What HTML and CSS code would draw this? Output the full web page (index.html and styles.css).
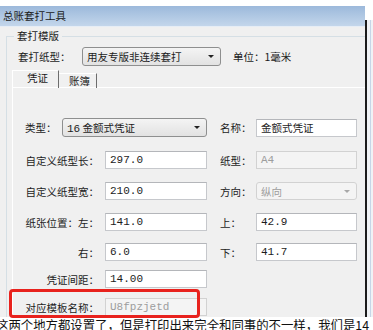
FILE: index.html
```html
<!DOCTYPE html>
<html lang="zh">

<head>
    <meta charset="utf-8">
    <title>总账套打工具</title>
    <link rel="stylesheet" href="styles.css">
</head>

<body>

    <div class="screen">

        <div class="win">
            <div class="main">
                <div class="titlebar">总账套打工具</div>

                <div class="client">
                    <fieldset class="group">
                        <legend>套打模版</legend>

                        <div class="paper">
                            <span class="paper_label">套打纸型：</span>
                            <div class="combo paper_combo">
                                <span>用友专版非连续套打</span>
                                <i class="arrow"></i>
                            </div>
                            <span class="unit">单位：1毫米</span>
                        </div>

                        <div class="tabs">
                            <div class="tab valgt">凭证</div>
                            <div class="tab">账簿</div>
                        </div>

                        <div class="panel">

                            <div class="row">
                                <div class="type">
                                    <span class="type_label">类型：</span>
                                    <div class="combo type_combo">
                                        <span><span class="mono">16</span> 金额式凭证</span>
                                        <i class="arrow"></i>
                                    </div>
                                </div>
                                <span class="rlabel">名称：</span>
                                <div class="field right">金额式凭证</div>
                            </div>

                            <div class="row r2">
                                <span class="label">自定义纸型长：</span>
                                <div class="field mono">297.0</div>
                                <span class="rlabel">纸型：</span>
                                <div class="field right mono off">A4</div>
                            </div>

                            <div class="row">
                                <span class="label">自定义纸型宽：</span>
                                <div class="field mono">210.0</div>
                                <span class="rlabel">方向：</span>
                                <div class="combo right off">
                                    <span>纵向</span>
                                    <i class="arrow"></i>
                                </div>
                            </div>

                            <div class="row">
                                <span class="label">纸张位置：左：</span>
                                <div class="field mono">141.0</div>
                                <span class="rlabel">上：</span>
                                <div class="field right mono">42.9</div>
                            </div>

                            <div class="row r5">
                                <span class="label">右：</span>
                                <div class="field mono">6.0</div>
                                <span class="rlabel">下：</span>
                                <div class="field right mono">41.7</div>
                            </div>

                            <div class="row r6">
                                <span class="label">凭证间距：</span>
                                <div class="field mono">14.00</div>
                            </div>

                            <div class="row r7">
                                <span class="label">对应模板名称：</span>
                                <div class="field mono off">U8fpzjetd</div>
                            </div>

                        </div>
                    </fieldset>
                </div>
            </div>

            <div class="edge"></div>
        </div>

        <div class="mark"></div>

        <p class="caption">这两个地方都设置了，但是打印出来完全和同事的不一样，我们是14</p>

    </div>

</body>

</html>
```

FILE: styles.css
```css
body {
    margin: 0;
    background-color: #fff;
}

.screen {
    position: relative;
    width: 373px;
    height: 330px;
    overflow: hidden;
    font-family: "Noto Sans CJK SC", "Noto Sans", sans-serif;
    font-size: 10.5px;
    color: #1c1c1c;
}

.win {
    display: flex;
    margin-top: 6px;
    height: 311px;
}

.main {
    width: 365px;
    height: 311px;
    overflow: hidden;
    background-color: #f0f0f0;
}

.edge {
    width: 6px;
    margin-top: 14px;
    border-left: 2px solid #1b1b1b;
    background: linear-gradient(to right, #f0f2f5 3px, #c7d5e7 3px, #c7d5e7 4px, #f0f2f5 4px);
}

.titlebar {
    height: 20px;
    line-height: 19px;
    padding-left: 3px;
    background: linear-gradient(#9cb9db, #c3d6eb);
    color: #1a1a1a;
}

.client {
    border-top: 1px solid #e6edf5;
    padding-top: 2px;
}

/* group box */
.group {
    margin: 0 -10px 0 6px;
    padding: 0 0 20px 11px;
    border: 1px solid #d5dfe5;
    min-width: 0;
}

.group legend {
    margin-left: -4px;
    padding: 0 3px;
    line-height: 14px;
}

.paper {
    display: flex;
    align-items: center;
    margin-top: 4px;
}

.paper_label {
    width: 64px;
}

.combo {
    display: flex;
    align-items: center;
    box-sizing: border-box;
    height: 18px;
    padding: 0 6px 0 4px;
    border: 1px solid #8e8f8f;
    border-radius: 3px;
    background: linear-gradient(#f4f4f4, #e2e2e2);
}

.combo span {
    flex: 1;
}

.arrow {
    width: 0;
    height: 0;
    border-left: 3px solid transparent;
    border-right: 3px solid transparent;
    border-top: 3px solid #222;
}

.paper_combo {
    width: 139px;
    height: 19px;
}

.unit {
    margin-left: 12px;
}

/* tabs */
.tabs {
    display: flex;
    align-items: flex-end;
    margin: 4px 0 0 -6px;
    height: 18px;
}

.tab {
    position: relative;
    box-sizing: border-box;
    height: 15px;
    width: 38px;
    padding-left: 10px;
    border-top: 1px solid #fff;
    border-right: 1px solid #6d6d6d;
    line-height: 14px;
}

.tab.valgt {
    height: 18px;
    width: 47px;
    padding-left: 14px;
    border-left: 1px solid #fff;
    z-index: 1;
}

.panel {
    margin: -1px 0 0 -6px;
    padding: 30px 0 0 12px;
    border-top: 1px solid #fff;
    border-left: 1px solid #fff;
}

/* form rows */
.row {
    display: grid;
    grid-template-columns: 80px 115px 36px 101px;
    align-items: center;
    height: 18px;
    margin-top: 13px;
}

.row:first-child {
    margin-top: 0;
    height: 19px;
}

.r2 {
    margin-top: 14px;
}

.r5 {
    margin-top: 12px;
}

.r6 {
    margin-top: 9px;
}

.r7 {
    margin-top: 10px;
}

.type {
    grid-column: span 2;
    display: flex;
    align-items: center;
}

.type_label {
    width: 37px;
}

.combo.type_combo {
    width: 145px;
    height: 19px;
}

.label {
    padding-right: 6px;
    text-align: right;
}

.field {
    box-sizing: border-box;
    width: 102px;
    height: 18px;
    padding-left: 4px;
    line-height: 16px;
    border: 1px solid #c6c8cc;
    border-top-color: #b4b6ba;
    background-color: #fff;
}

.right {
    width: 101px;
}

.mono {
    font-family: "Liberation Mono", "DejaVu Sans Mono", monospace;
    font-size: 11px;
}

.off {
    background: #f4f4f4;
    border-color: #d2d2d2;
    color: #9d9d9d;
}

.off .arrow {
    border-top-color: #a8a8a8;
}

/* red annotation */
.mark {
    position: absolute;
    left: 9px;
    top: 289px;
    width: 191px;
    height: 29px;
    box-sizing: border-box;
    border: 3px solid #e8221d;
    border-radius: 4px;
}

.caption {
    margin: 0 0 0 -4px;
    font-size: 12.4px;
    line-height: 16px;
    white-space: nowrap;
    color: #111;
}
```
